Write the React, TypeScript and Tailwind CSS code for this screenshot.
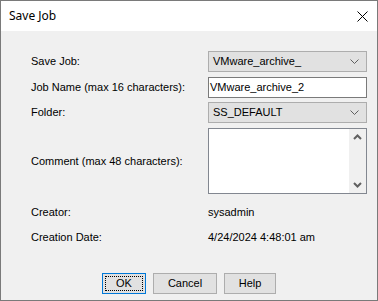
import React from 'react';

const Chevron = () => (
  <svg width="9" height="5" viewBox="0 0 9 5" className="shrink-0">
    <polyline points="0.5,0.5 4.5,4.5 8.5,0.5" fill="none" stroke="#5f5f5f" strokeWidth="1" />
  </svg>
);

const ScrollArrow = ({ up }: { up?: boolean }) => (
  <svg width="9" height="6" viewBox="0 0 9 6">
    <polyline
      points={up ? '1,5 4.5,1.5 8,5' : '1,1 4.5,4.5 8,1'}
      fill="none"
      stroke="#606060"
      strokeWidth="2"
    />
  </svg>
);

function Select({ value }: { value: string }) {
  return (
    <div className="w-[159px] h-[21px] flex items-center justify-between bg-[#e1e1e1] border border-[#adadad] pl-[4px] pr-[7px]">
      <span>{value}</span>
      <Chevron />
    </div>
  );
}

function Row({ label, children, className = '' }: { label: string; children: React.ReactNode; className?: string }) {
  return (
    <div className={`flex items-center ${className}`}>
      <div className="w-[177px] shrink-0">{label}</div>
      {children}
    </div>
  );
}

export default function App() {
  return (
    <div className="w-[378px] h-[301px] flex flex-col border border-[#7a7a7a] bg-white font-['Liberation_Sans',Arial,sans-serif] text-[11px] text-black">
      {/* Title bar */}
      <div className="h-[30px] flex items-center justify-between bg-white pl-[8px] pr-[9px]">
        <span className="font-['Noto_Sans',sans-serif] text-[12px]">Save Job</span>
        <svg width="11" height="11" viewBox="0 0 11 11">
          <path d="M0.5 0.5 L10.5 10.5 M10.5 0.5 L0.5 10.5" stroke="#000" strokeWidth="1" />
        </svg>
      </div>

      {/* Body */}
      <div className="flex-1 bg-[#f0f0f0] pl-[30px] pt-[20px]">
        <Row label="Save Job:">
          <Select value="VMware_archive_" />
        </Row>
        <Row label="Job Name (max 16 characters):" className="mt-[5px]">
          <div className="w-[159px] h-[21px] flex items-center bg-white border border-[#7a7a7a] pl-[1px]">
            VMware_archive_2
          </div>
        </Row>
        <Row label="Folder:" className="mt-[4px]">
          <Select value="SS_DEFAULT" />
        </Row>
        <Row label="Comment (max 48 characters):" className="mt-[5px]">
          <div className="w-[159px] h-[66px] flex bg-white border border-[#828790]">
            <div className="flex-1" />
            <div className="w-[17px] bg-[#f0f0f0] flex flex-col items-center justify-between py-[5px]">
              <ScrollArrow up />
              <ScrollArrow />
            </div>
          </div>
        </Row>
        <Row label="Creator:" className="mt-[8px] h-[20px]">
          <span>sysadmin</span>
        </Row>
        <Row label="Creation Date:" className="mt-[5px] h-[20px]">
          <span>4/24/2024 4:48:01 am</span>
        </Row>

        <div className="flex justify-center gap-[7px] mt-[26px] -ml-[30px]">
          <div className="w-[44px] h-[21px] bg-[#e1e1e1] border border-[#0078d7] p-[2px]">
            <div className="w-full h-full border border-dotted border-black flex items-center justify-center">OK</div>
          </div>
          <div className="w-[64px] h-[21px] bg-[#e1e1e1] border border-[#adadad] flex items-center justify-center">Cancel</div>
          <div className="w-[52px] h-[21px] bg-[#e1e1e1] border border-[#adadad] flex items-center justify-center">Help</div>
        </div>
      </div>
    </div>
  );
}
